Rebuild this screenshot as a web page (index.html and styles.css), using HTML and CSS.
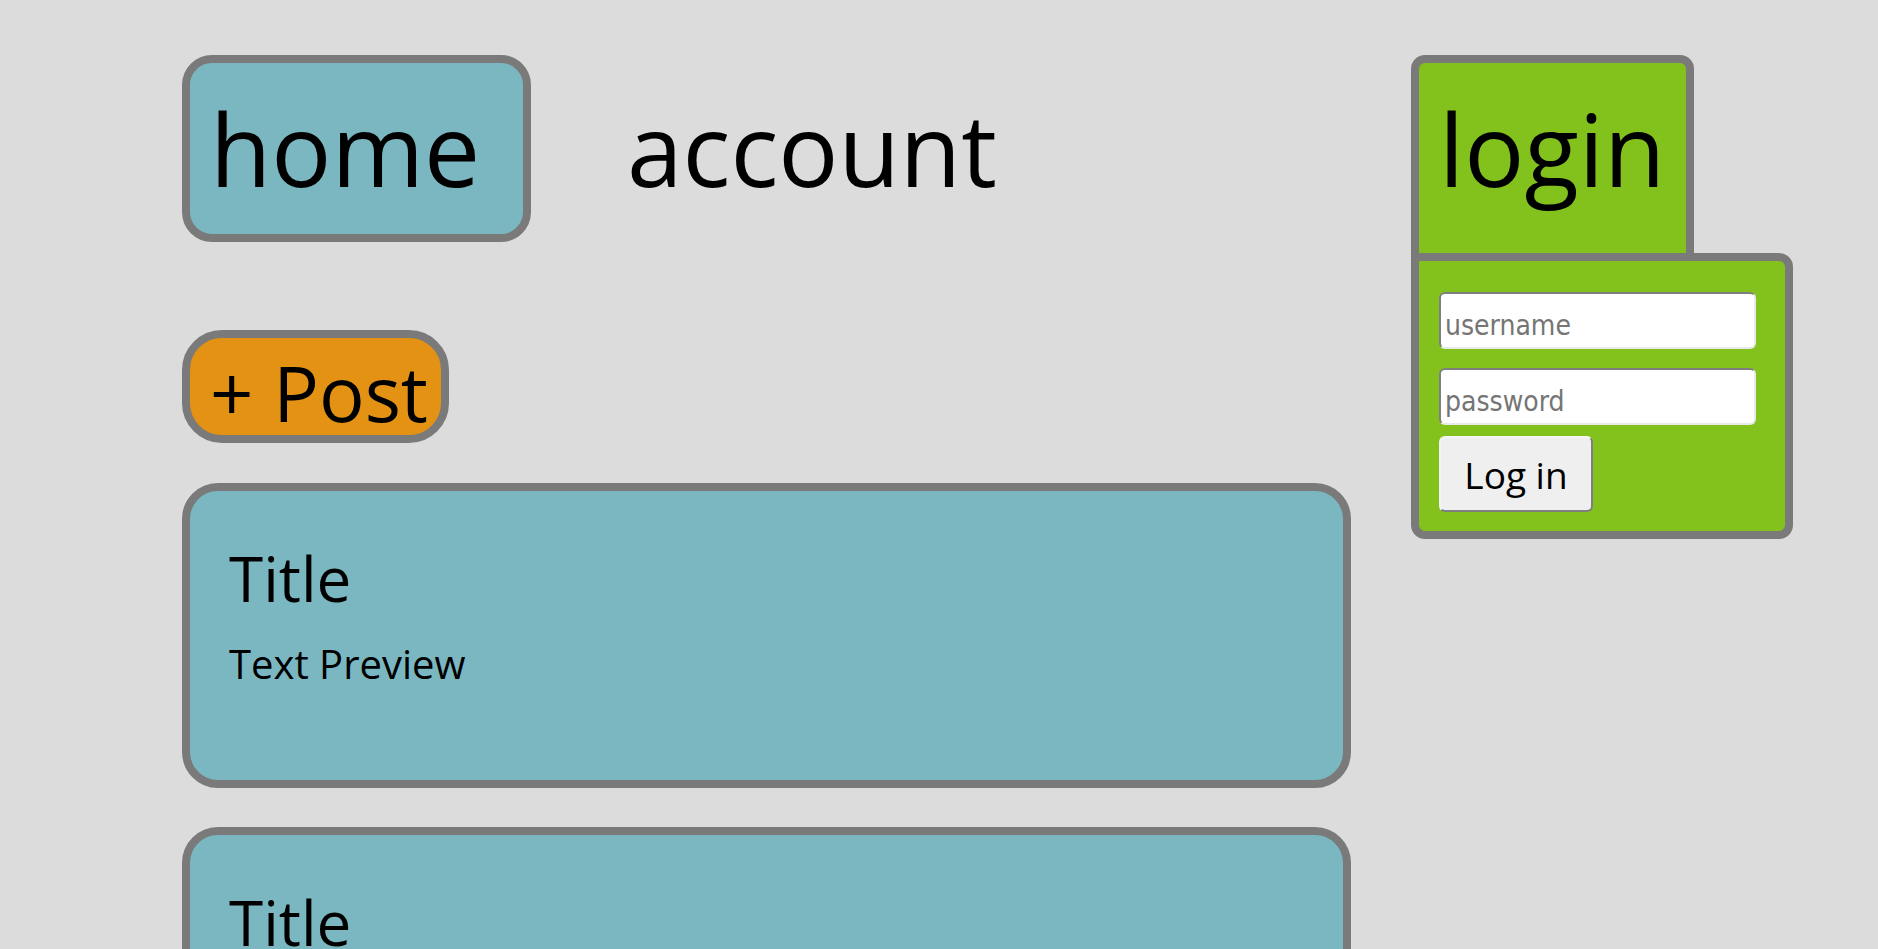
FILE: index.html
```html
<!DOCTYPE html>
<html lang="en">
<head>
<meta charset="utf-8">
<title>Forum</title>
<link rel="stylesheet" href="styles.css">
</head>
<body>
<div class="page">
  <main class="feed">
    <nav class="nav">
      <a class="nav-item nav-home" href="#">home</a>
      <a class="nav-item nav-account" href="#">account</a>
    </nav>
    <button class="post-btn" type="button">+ Post</button>
    <article class="card">
      <h2 class="card-title">Title</h2>
      <p class="card-text">Text Preview</p>
    </article>
    <article class="card">
      <h2 class="card-title">Title</h2>
      <p class="card-text">Text Preview</p>
    </article>
  </main>
  <aside class="login">
    <div class="login-tab">login</div>
    <form class="login-panel">
      <input class="login-input" type="text" placeholder="username">
      <input class="login-input" type="password" placeholder="password">
      <button class="login-btn" type="button">Log in</button>
    </form>
  </aside>
</div>
</body>
</html>
```
FILE: styles.css
```css
html, body {
  margin: 0;
  padding: 0;
}
body {
  background: #dcdcdc;
  font-family: "Open Sans", "Noto Sans", sans-serif;
  color: #000;
  height: 949px;
  overflow: hidden;
}
.page {
  display: flex;
  align-items: flex-start;
  gap: 60px;
  padding: 55px 0 0 182px;
}
.feed {
  width: 1169px;
  display: flex;
  flex-direction: column;
  align-items: flex-start;
}
.nav {
  display: flex;
  align-items: flex-start;
  gap: 68px;
}
.nav-item {
  display: block;
  font-size: 100px;
  line-height: 136px;
  padding: 17px 20px 18px;
  border: 8px solid transparent;
  border-radius: 30px;
  color: #000;
  text-decoration: none;
}
.nav-home {
  width: 293px;
  background: #7bb7c1;
  border-color: #7a7a7a;
}
.post-btn {
  margin-top: 88px;
  box-sizing: border-box;
  width: 267px;
  height: 113px;
  padding: 13px 0 0 20px;
  text-align: left;
  white-space: nowrap;
  font-family: "Open Sans", "Noto Sans", sans-serif;
  font-size: 76px;
  line-height: 84px;
  color: #000;
  background: #e49213;
  border: 8px solid #7a7a7a;
  border-radius: 40px;
  display: block;
  overflow: hidden;
}
.card {
  box-sizing: border-box;
  width: 1169px;
  height: 305px;
  margin-top: 40px;
  padding: 45px 39px 0;
  background: #7bb7c1;
  border: 8px solid #7a7a7a;
  border-radius: 36px;
}
.card + .card {
  margin-top: 39px;
}
.card-title {
  margin: 0;
  font-size: 62px;
  font-weight: 400;
  line-height: normal;
}
.card-text {
  margin: 16px 0 0;
  font-size: 40px;
  line-height: normal;
}
.login {
  width: 382px;
  display: flex;
  flex-direction: column;
  align-items: flex-start;
}
.login-tab {
  box-sizing: border-box;
  width: 283px;
  height: 198px;
  padding: 17px 20px 0;
  font-size: 100px;
  line-height: 136px;
  background: #83c11d;
  border: 8px solid #7a7a7a;
  border-bottom: none;
  border-radius: 14px 14px 0 0;
}
.login-panel {
  box-sizing: border-box;
  width: 382px;
  margin: 0;
  padding: 31px 20px 19px;
  background: #83c11d;
  border: 8px solid #7a7a7a;
  border-radius: 0 14px 14px 14px;
  display: flex;
  flex-direction: column;
  align-items: flex-start;
}
.login-input {
  box-sizing: border-box;
  display: block;
  width: 317px;
  height: 57px;
  margin: 0 0 19px;
  padding: 9px 4px 0;
  background: #fff;
  border: 2px solid;
  border-color: #7f7f7f #e9e9e9 #e9e9e9 #7f7f7f;
  border-radius: 6px;
  font-family: "DejaVu Sans Condensed", "DejaVu Sans", sans-serif;
  font-stretch: condensed;
  font-size: 28px;
  color: #000;
  outline: none;
}
.login-input + .login-input {
  margin-bottom: 11px;
}
.login-input::placeholder {
  color: #757575;
}
.login-btn {
  box-sizing: border-box;
  width: 154px;
  height: 76px;
  padding: 0;
  background: #efefef;
  border: 2px solid;
  border-color: #f4f4f4 #7f7f7f #7f7f7f #f4f4f4;
  border-radius: 6px;
  font-family: "Open Sans", "Noto Sans", sans-serif;
  font-size: 37px;
  color: #000;
}
```
